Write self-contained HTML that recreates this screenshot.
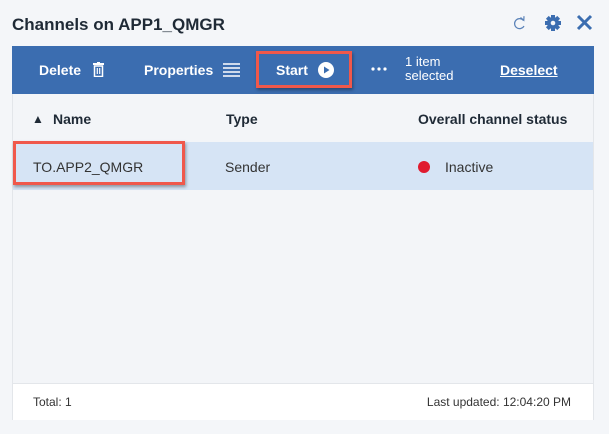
<!DOCTYPE html>
<html><head><meta charset="utf-8"><style>
*{margin:0;padding:0;box-sizing:border-box}
body{width:609px;height:434px;background:#f4f6f9;font-family:"Liberation Sans",sans-serif;position:relative;overflow:hidden;color:#222}
.abs{position:absolute}
.title{left:12px;top:15px;font-size:17px;font-weight:bold;color:#1f2a36}
.tb{left:12px;top:46px;width:582px;height:48px;background:#3b6db0;color:#fff;font-weight:bold;font-size:14px}
.tb span{position:absolute;top:16px}
.panel{left:12px;top:94px;width:582px;height:326px;background:#f3f5f8;border:1px solid #e3e6ea;border-top:none}
.hdr{left:12px;top:94px;width:582px;height:48px;font-weight:bold;font-size:14px;color:#1f2a36}
.row{left:13px;top:142px;width:580px;height:48px;background:#d6e4f5;font-size:14px;color:#333}
.foot{left:13px;top:383px;width:580px;height:37px;background:#fff;border-top:1px solid #e3e6ea;font-size:12px;color:#333}
.red{border:3px solid #f0584b;box-shadow:1px 2px 3px rgba(0,0,0,.35)}
</style></head><body>
<div class="abs title">Channels on APP1_QMGR</div>
<svg class="abs" style="left:513px;top:14px" width="14" height="18" viewBox="0 0 14 18"><path d="M10.5 6.5A5 5 0 1 0 11 12" fill="none" stroke="#5a82b8" stroke-width="1.2"/><path d="M7.5 3.5L10.8 6.3 11 2.2" fill="none" stroke="#5a82b8" stroke-width="1.2"/></svg>
<svg class="abs" style="left:544px;top:14px" width="18" height="18" viewBox="0 0 18 18"><g fill="#3b6db0"><circle cx="9" cy="9" r="6"/><rect x="7" y="1" width="4" height="16"/><rect x="1" y="7" width="16" height="4"/><rect x="7" y="1" width="4" height="16" transform="rotate(45 9 9)"/><rect x="7" y="1" width="4" height="16" transform="rotate(-45 9 9)"/></g><circle cx="9" cy="9" r="2.3" fill="#f4f6f9"/></svg>
<svg class="abs" style="left:576px;top:14px" width="17" height="17" viewBox="0 0 17 17"><path d="M2 2L15 15M15 2L2 15" stroke="#3b6db0" stroke-width="3"/></svg>
<div class="abs panel"></div>
<div class="abs tb">
<span style="left:27px">Delete</span>
<svg class="abs" style="left:81px;top:16px" width="11" height="15" viewBox="0 0 11 15"><rect x="0" y="1" width="11" height="2" fill="#fff"/><rect x="4" y="0" width="3" height="2" fill="#fff"/><rect x="1.5" y="4" width="8" height="10.5" fill="none" stroke="#fff" stroke-width="1.5"/><path d="M4.3 6v6M6.7 6v6" stroke="#fff" stroke-width="1.2"/></svg>
<span style="left:132px">Properties</span>
<svg class="abs" style="left:211px;top:17px" width="17" height="14" viewBox="0 0 17 14"><path d="M0 1h17M0 5h17M0 9h17M0 13h17" stroke="#fff" stroke-width="1.6"/></svg>
<span style="left:264px">Start</span>
<svg class="abs" style="left:306px;top:16px" width="16" height="16" viewBox="0 0 16 16"><circle cx="8" cy="8" r="8" fill="#fff"/><path d="M6 4.5L11.5 8 6 11.5z" fill="#3b6db0"/></svg>
<svg class="abs" style="left:359px;top:21px" width="16" height="4" viewBox="0 0 16 4"><circle cx="2" cy="2" r="1.6" fill="#fff"/><circle cx="8" cy="2" r="1.6" fill="#fff"/><circle cx="14" cy="2" r="1.6" fill="#fff"/></svg>
<span style="left:393px;top:9px;font-weight:normal;font-size:13px;line-height:14px">1 item<br>selected</span>
<span style="left:488px;text-decoration:underline">Deselect</span>
</div>
<div class="abs red" style="left:256px;top:51px;width:96px;height:37px"></div>
<div class="abs hdr">
<span class="abs" style="left:20px;top:18px;font-size:12px">&#9650;</span>
<span class="abs" style="left:41px;top:17px">Name</span>
<span class="abs" style="left:214px;top:17px">Type</span>
<span class="abs" style="left:406px;top:17px">Overall channel status</span>
</div>
<div class="abs row">
<span class="abs" style="left:20px;top:17px">TO.APP2_QMGR</span>
<span class="abs" style="left:212px;top:17px">Sender</span>
<span class="abs" style="left:405px;top:19px;width:12px;height:12px;border-radius:50%;background:#e01b2f"></span>
<span class="abs" style="left:432px;top:17px">Inactive</span>
</div>
<div class="abs red" style="left:13px;top:141px;width:172px;height:44px"></div>
<div class="abs foot">
<span class="abs" style="left:20px;top:11px">Total: 1</span>
<span class="abs" style="right:22px;top:11px">Last updated: 12:04:20 PM</span>
</div>
</body></html>
